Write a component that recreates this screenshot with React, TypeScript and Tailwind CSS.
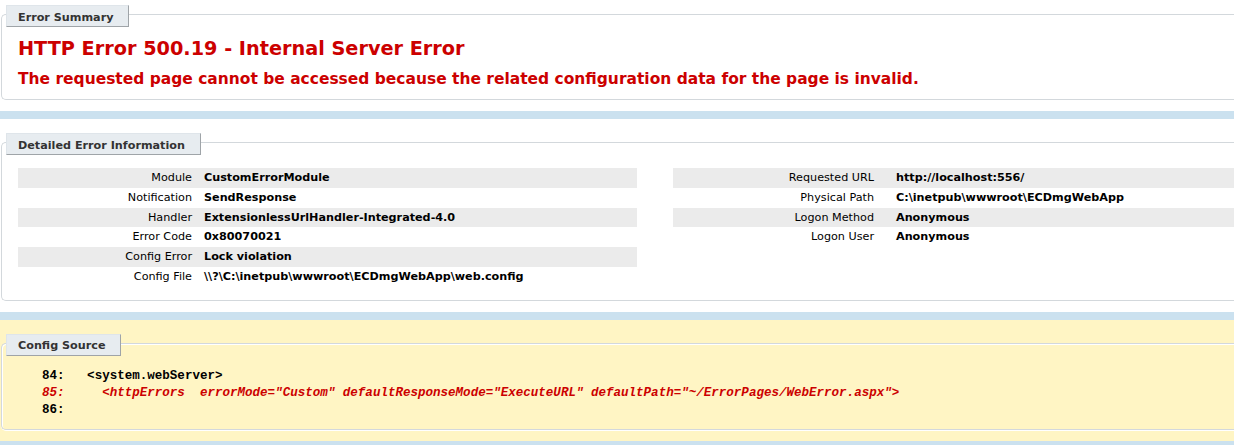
import React from "react";

function Legend({ children, className }: { children: React.ReactNode; className: string }) {
  return (
    <div
      className={
        "relative z-10 ml-[5px] flex h-[22px] items-center whitespace-nowrap border border-t-[#dfe5ea] border-l-[#dfe5ea] border-r-[#9fa4a8] border-b-[#9fa4a8] bg-[#e7ecf0] pt-[2px] pl-[11px] text-[11.2px] font-bold leading-[13px] text-[#333333] " +
        className
      }
    >
      {children}
    </div>
  );
}

const left: [string, string][] = [
  ["Module", "CustomErrorModule"],
  ["Notification", "SendResponse"],
  ["Handler", "ExtensionlessUrlHandler-Integrated-4.0"],
  ["Error Code", "0x80070021"],
  ["Config Error", "Lock violation"],
  ["Config File", "\\\\?\\C:\\inetpub\\wwwroot\\ECDmgWebApp\\web.config"],
];

const right: [string, string][] = [
  ["Requested URL", "http://localhost:556/"],
  ["Physical Path", "C:\\inetpub\\wwwroot\\ECDmgWebApp"],
  ["Logon Method", "Anonymous"],
  ["Logon User", "Anonymous"],
];

export default function App() {
  return (
    <div className="min-h-screen w-full overflow-hidden bg-[#cbe1ef] font-['DejaVu_Sans',Verdana,sans-serif] text-black">
      {/* Error Summary */}
      <div className="bg-white pt-[5px] pb-[11px]">
        <div className="ml-[1px]">
          <Legend className="w-[123px]">Error Summary</Legend>
          <div className="-mt-[13px] rounded-l-[5px] border-y border-l border-[#d3d8dc] pt-[23px] pb-[11px] pl-[16px] shadow-[inset_1px_1px_0_#ffffff,0_1px_0_#ffffff]">
            <h2 className="whitespace-nowrap text-[19.25px] font-bold leading-[22px] text-[#cc0000]">
              HTTP Error 500.19 - Internal Server Error
            </h2>
            <h3 className="mt-[10px] whitespace-nowrap text-[15.48px] font-bold leading-[18px] text-[#cc0000]">
              The requested page cannot be accessed because the related configuration data for the page is invalid.
            </h3>
          </div>
        </div>
      </div>

      {/* Detailed Error Information */}
      <div className="mt-[8px] bg-white pt-[14px] pb-[11px]">
        <div className="ml-[1px]">
          <Legend className="w-[195px]">Detailed Error Information</Legend>
          <div className="-mt-[13px] rounded-l-[5px] border-y border-l border-[#d3d8dc] pt-[25px] pb-[13px] pl-[16px] shadow-[inset_1px_1px_0_#ffffff,0_1px_0_#ffffff]">
            <div className="flex text-[11.2px]">
              <div className="w-[619px] shrink-0">
                {left.map(([k, v], i) => (
                  <div
                    key={k}
                    className={"flex py-[3px] leading-[13.8px] " + (i % 2 === 0 ? "bg-[#ebebeb]" : "")}
                  >
                    <div className="w-[186px] shrink-0 pr-[12px] text-right">{k}</div>
                    <div className="whitespace-nowrap font-bold">{v}</div>
                  </div>
                ))}
              </div>
              <div className="ml-[36px] flex-1">
                {right.map(([k, v], i) => (
                  <div
                    key={k}
                    className={"flex py-[3px] leading-[13.8px] " + (i % 2 === 0 ? "bg-[#ebebeb]" : "")}
                  >
                    <div className="w-[223px] shrink-0 pr-[22px] text-right">{k}</div>
                    <div className="whitespace-nowrap font-bold">{v}</div>
                  </div>
                ))}
              </div>
            </div>
          </div>
        </div>
      </div>

      {/* Config Source */}
      <div className="mt-[8px] bg-[#fff5c4] pt-[14px] pb-[11px]">
        <div className="ml-[1px]">
          <Legend className="w-[115px]">Config Source</Legend>
          <div className="-mt-[13px] rounded-l-[5px] border-y border-l border-[#d3d8dc] pt-[24px] pb-[10px] pl-[16px] shadow-[inset_1px_1px_0_#ffffff,0_1px_0_#ffffff]">
            <pre className="ml-[24px] whitespace-pre font-['Liberation_Mono','Courier_New',monospace] text-[12.54px] font-bold leading-[17px]">
              <div className="text-black">{"84:   <system.webServer>"}</div>
              <div className="italic text-[#cc0000]">
                {'85:     <httpErrors  errorMode="Custom" defaultResponseMode="ExecuteURL" defaultPath="~/ErrorPages/WebError.aspx">'}
              </div>
              <div className="text-black">{"86: "}</div>
            </pre>
          </div>
        </div>
      </div>
    </div>
  );
}
